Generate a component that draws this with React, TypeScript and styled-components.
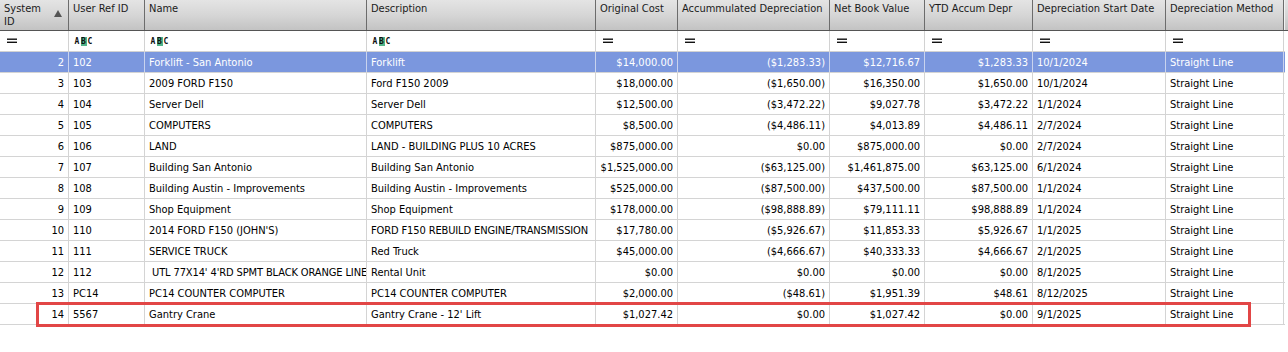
import React from "react";
import styled, { createGlobalStyle } from "styled-components";

const GlobalStyle = createGlobalStyle`
  html, body { margin: 0; padding: 0; background: #ffffff; }
  body { font-family: "DejaVu Sans Condensed", "DejaVu Sans", sans-serif; font-size: 11px; color: #000; }
  * { box-sizing: border-box; }
`;

type Align = "left" | "right";
type Col = { title: string; width: number; align: Align; text: boolean };

const columns: Col[] = [
  { title: "System ID", width: 69, align: "right", text: false },
  { title: "User Ref ID", width: 76, align: "left", text: true },
  { title: "Name", width: 222, align: "left", text: true },
  { title: "Description", width: 229, align: "left", text: true },
  { title: "Original Cost", width: 82, align: "right", text: false },
  { title: "Accummulated Depreciation", width: 152, align: "right", text: false },
  { title: "Net Book Value", width: 95, align: "right", text: false },
  { title: "YTD Accum Depr", width: 108, align: "right", text: false },
  { title: "Depreciation Start Date", width: 133, align: "left", text: false },
  { title: "Depreciation Method", width: 118, align: "left", text: false },
];

const rows: string[][] = [
  ["2", "102", "Forklift - San Antonio", "Forklift", "$14,000.00", "($1,283.33)", "$12,716.67", "$1,283.33", "10/1/2024", "Straight Line"],
  ["3", "103", "2009 FORD F150", "Ford F150 2009", "$18,000.00", "($1,650.00)", "$16,350.00", "$1,650.00", "10/1/2024", "Straight Line"],
  ["4", "104", "Server Dell", "Server Dell", "$12,500.00", "($3,472.22)", "$9,027.78", "$3,472.22", "1/1/2024", "Straight Line"],
  ["5", "105", "COMPUTERS", "COMPUTERS", "$8,500.00", "($4,486.11)", "$4,013.89", "$4,486.11", "2/7/2024", "Straight Line"],
  ["6", "106", "LAND", "LAND - BUILDING PLUS 10 ACRES", "$875,000.00", "$0.00", "$875,000.00", "$0.00", "2/7/2024", "Straight Line"],
  ["7", "107", "Building San Antonio", "Building San Antonio", "$1,525,000.00", "($63,125.00)", "$1,461,875.00", "$63,125.00", "6/1/2024", "Straight Line"],
  ["8", "108", "Building Austin - Improvements", "Building Austin - Improvements", "$525,000.00", "($87,500.00)", "$437,500.00", "$87,500.00", "1/1/2024", "Straight Line"],
  ["9", "109", "Shop Equipment", "Shop Equipment", "$178,000.00", "($98,888.89)", "$79,111.11", "$98,888.89", "1/1/2024", "Straight Line"],
  ["10", "110", "2014 FORD F150 (JOHN'S)", "FORD F150 REBUILD ENGINE/TRANSMISSION", "$17,780.00", "($5,926.67)", "$11,853.33", "$5,926.67", "1/1/2025", "Straight Line"],
  ["11", "111", "SERVICE TRUCK", "Red Truck", "$45,000.00", "($4,666.67)", "$40,333.33", "$4,666.67", "2/1/2025", "Straight Line"],
  ["12", "112", "\u00a0UTL 77X14' 4'RD SPMT BLACK ORANGE LINE", "Rental Unit", "$0.00", "$0.00", "$0.00", "$0.00", "8/1/2025", "Straight Line"],
  ["13", "PC14", "PC14 COUNTER COMPUTER", "PC14 COUNTER COMPUTER", "$2,000.00", "($48.61)", "$1,951.39", "$48.61", "8/12/2025", "Straight Line"],
  ["14", "5567", "Gantry Crane", "Gantry Crane - 12' Lift", "$1,027.42", "$0.00", "$1,027.42", "$0.00", "9/1/2025", "Straight Line"],
];

const template = columns.map((c) => `${c.width}px`).join(" ");

const Grid = styled.div`
  position: relative;
  width: 1288px;
  height: 352px;
  background: #ffffff;
  overflow: hidden;
`;

const HeaderRow = styled.div`
  display: grid;
  grid-template-columns: ${template} 1fr;
  height: 31px;
  background: linear-gradient(to bottom, #e4e4e4 0%, #d6d6d6 50%, #c3c3c3 100%);
  border-bottom: 1px solid #555555;
`;

const HeaderCell = styled.div`
  position: relative;
  border-right: 1px solid #6c6c6c;
  padding: 2px 4px 0 4px;
  line-height: 13px;
  color: #1b1b1b;
  white-space: normal;
  overflow: hidden;
`;

const HeaderFiller = styled.div`
  border-left: 1px solid #f2f2f2;
`;

const SortArrow = styled.span`
  position: absolute;
  right: 6px;
  top: 10px;
  width: 0;
  height: 0;
  border-left: 4px solid transparent;
  border-right: 4px solid transparent;
  border-bottom: 7px solid #555555;
`;

const FilterRow = styled.div`
  display: grid;
  grid-template-columns: ${template};
  width: 1285px;
  height: 21px;
  border-bottom: 1px solid #d2d2d2;
`;

const FilterCell = styled.div`
  border-right: 1px solid #d2d2d2;
  display: flex;
  align-items: center;
  padding-left: 7px;
`;

const DataRow = styled.div<{ $selected?: boolean }>`
  display: grid;
  grid-template-columns: ${template};
  width: 1285px;
  height: 21px;
  border-bottom: 1px solid #d4d4d4;
  background: ${(p) => (p.$selected ? "#7b97de" : "#ffffff")};
  color: ${(p) => (p.$selected ? "#ffffff" : "#000000")};
`;

const Cell = styled.div<{ $align: Align; $selected?: boolean; $tight?: boolean }>`
  border-right: 1px solid ${(p) => (p.$selected ? "#c9d3ee" : "#d4d4d4")};
  padding: 1px 4px 0 4px;
  line-height: 20px;
  text-align: ${(p) => p.$align};
  letter-spacing: ${(p) => (p.$tight ? "-0.12px" : "normal")};
  white-space: nowrap;
  overflow: hidden;
`;

const Highlight = styled.div`
  position: absolute;
  left: 36px;
  top: 302px;
  width: 1215px;
  height: 25px;
  border: 3px solid #e24646;
  pointer-events: none;
`;

const AbcIcon = styled.span`
  display: inline-flex;
  align-items: center;
  height: 9px;
  font-family: "DejaVu Sans Mono", monospace;
  font-weight: bold;
  font-size: 8px;
  line-height: 9px;
  color: #111;
  margin-left: -2px;
`;

const AbcLetter = styled.span<{ $boxed?: boolean }>`
  display: inline-block;
  width: ${(p) => (p.$boxed ? "6px" : "5px")};
  height: 9px;
  text-align: center;
  background: ${(p) => (p.$boxed ? "#52b58a" : "transparent")};
  margin: 0 0.5px;
`;

const EqualsIcon = () => (
  <svg width="10" height="6" viewBox="0 0 10 6" style={{ display: "block" }}>
    <rect x="0" y="0.5" width="10" height="1.4" fill="#111" />
    <rect x="0" y="3.6" width="10" height="1.4" fill="#111" />
  </svg>
);

const Abc = () => (
  <AbcIcon>
    <AbcLetter>A</AbcLetter>
    <AbcLetter $boxed>B</AbcLetter>
    <AbcLetter>C</AbcLetter>
  </AbcIcon>
);

export default function App() {
  return (
    <>
      <GlobalStyle />
      <Grid>
        <HeaderRow>
          {columns.map((c, i) => (
            <HeaderCell key={c.title}>
              {i === 0 ? (
                <>
                  System
                  <br />
                  ID
                  <SortArrow />
                </>
              ) : (
                c.title
              )}
            </HeaderCell>
          ))}
          <HeaderFiller />
        </HeaderRow>
        <FilterRow>
          {columns.map((c) => (
            <FilterCell key={c.title}>{c.text ? <Abc /> : <EqualsIcon />}</FilterCell>
          ))}
        </FilterRow>
        {rows.map((r, ri) => {
          const selected = ri === 0;
          return (
            <DataRow key={r[0]} $selected={selected}>
              {r.map((v, ci) => (
                <Cell
                  key={ci}
                  $align={columns[ci].align}
                  $selected={selected}
                  $tight={v.length > 36}
                >
                  {v}
                </Cell>
              ))}
            </DataRow>
          );
        })}
        <Highlight />
      </Grid>
    </>
  );
}
